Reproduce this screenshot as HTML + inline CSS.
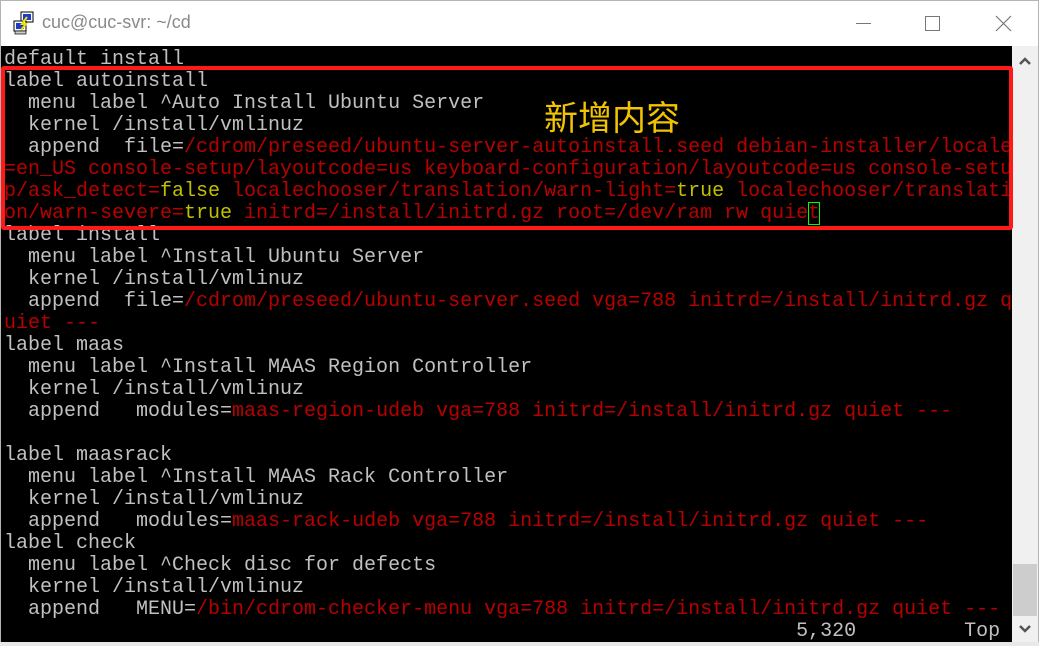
<!DOCTYPE html>
<html><head><meta charset="utf-8"><style>
*{margin:0;padding:0;box-sizing:border-box}
body{width:1039px;height:646px;overflow:hidden;background:#fff;position:relative;font-family:"Liberation Sans",sans-serif}
.frame{position:absolute;inset:0;border:1px solid #b4b4b4}
.title{position:absolute;left:42px;top:12px;font-size:18px;color:#8a8a8a;font-family:"Liberation Sans","Noto Sans CJK SC",sans-serif}
.term{position:absolute;left:1px;top:46px;width:1011px;height:596px;background:#000}
pre{position:absolute;left:4px;top:49px;font-family:"Liberation Mono",monospace;font-size:20px;line-height:22px;color:#c0c0c0;white-space:pre}
.r{color:#b80000}.y{color:#c0c000}
.cur{outline:1.5px solid #00ff00;outline-offset:-1px}
.box{position:absolute;left:1px;top:66px;width:1012px;height:164px;border:4px solid #ff1a1a;border-radius:3px}
.cn{position:absolute;left:544px;top:94px;font-size:34px;color:#f2c300;font-family:"Noto Sans CJK SC",sans-serif;line-height:44px}
.sb{position:absolute;left:1012px;top:46px;width:26px;height:596px;background:#f0f0f0}
.thumb{position:absolute;left:1013px;top:564px;width:24px;height:52px;background:#cdcdcd}
.bot{position:absolute;left:0;top:642px;width:1039px;height:4px;background:#e8e8e8}
</style></head><body>
<div class="frame"></div>
<svg style="position:absolute;left:13px;top:11px" width="24" height="24" viewBox="0 0 24 24">
<rect x="8" y="1" width="12" height="10" fill="#fff" stroke="#000"/><rect x="10" y="3" width="8" height="6" fill="#1a3cc8"/>
<rect x="1" y="10" width="12" height="10" fill="#fff" stroke="#000"/><rect x="3" y="12" width="8" height="6" fill="#1a3cc8"/>
<rect x="2" y="20" width="11" height="3" fill="#ccc" stroke="#000" stroke-width=".7"/>
<path d="M14 6 L9 13 L13 13 L8 19" stroke="#f0e000" stroke-width="2" fill="none"/>
</svg>
<div class="title">cuc@cuc-svr: ~/cd</div>
<div style="position:absolute;left:856px;top:23px;width:15px;height:1px;background:#777"></div>
<div style="position:absolute;left:925px;top:16px;width:15px;height:15px;border:1px solid #777"></div>
<svg style="position:absolute;left:995px;top:15px" width="17" height="17"><path d="M1 1L16 16M16 1L1 16" stroke="#777" stroke-width="1.2"/></svg>
<div class="term"></div>
<div class="sb"></div>
<svg style="position:absolute;left:1018px;top:56px" width="14" height="10"><path d="M2 8L7 3L12 8" stroke="#555" stroke-width="2.5" fill="none"/></svg>
<div class="thumb"></div>
<svg style="position:absolute;left:1018px;top:624px" width="14" height="10"><path d="M2 2L7 7L12 2" stroke="#555" stroke-width="2.5" fill="none"/></svg>
<div class="bot"></div>
<pre>default install
label autoinstall
  menu label ^Auto Install Ubuntu Server
  kernel /install/vmlinuz
  append  file=<span class="r">/cdrom/preseed/ubuntu-server-autoinstall.seed debian-installer/locale</span>
<span class="r">=en_US console-setup/layoutcode=us keyboard-configuration/layoutcode=us console-setu</span>
<span class="r">p/ask_detect=</span><span class="y">false</span><span class="r"> localechooser/translation/warn-light=</span><span class="y">true</span><span class="r"> localechooser/translati</span>
<span class="r">on/warn-severe=</span><span class="y">true</span><span class="r"> initrd=/install/initrd.gz root=/dev/ram rw quie<span class="cur">t</span></span>
label install
  menu label ^Install Ubuntu Server
  kernel /install/vmlinuz
  append  file=<span class="r">/cdrom/preseed/ubuntu-server.seed vga=788 initrd=/install/initrd.gz q</span>
<span class="r">uiet ---</span>
label maas
  menu label ^Install MAAS Region Controller
  kernel /install/vmlinuz
  append   modules=<span class="r">maas-region-udeb vga=788 initrd=/install/initrd.gz quiet ---</span>

label maasrack
  menu label ^Install MAAS Rack Controller
  kernel /install/vmlinuz
  append   modules=<span class="r">maas-rack-udeb vga=788 initrd=/install/initrd.gz quiet ---</span>
label check
  menu label ^Check disc for defects
  kernel /install/vmlinuz
  append   MENU=<span class="r">/bin/cdrom-checker-menu vga=788 initrd=/install/initrd.gz quiet ---</span>
                                                                  5,320         Top</pre>
<div class="box"></div>
<div class="cn">新增内容</div>
</body></html>
